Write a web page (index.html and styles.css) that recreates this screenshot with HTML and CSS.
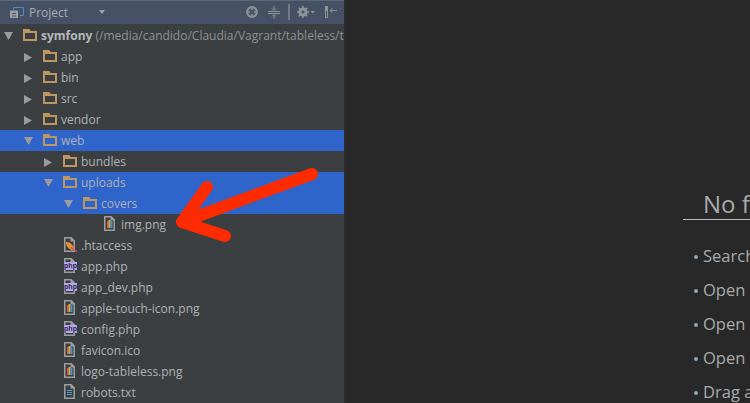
FILE: index.html
```html
<!DOCTYPE html>
<html lang="en">
<head>
<meta charset="utf-8">
<title>Project</title>
<link rel="stylesheet" href="styles.css">
</head>
<body>
<svg width="0" height="0" class="defs">
  <defs>
    <symbol id="folder" viewBox="0 0 14 12"><path fill-rule="evenodd" d="M0 0h6.500l1 2H14v10H0zM2 4v6h10V4z" fill="#bd9660"/></symbol>
    <symbol id="sheet" viewBox="0 0 11 15"><path fill-rule="evenodd" d="M0 0h7.500L11 3.500V15H0zM1.500 1.500v12h8V4.500H6.500v-3z" fill="#9b9fa1"/></symbol>
    <symbol id="image" viewBox="0 0 14 15"><use href="#sheet" width="11" height="15"/><rect x="3" y="5" width="1.500" height="7" fill="#d9603a"/><rect x="4.500" y="4" width="2" height="8" fill="#e3a93c"/><rect x="6.500" y="5" width="2" height="7" fill="#3f94d2"/></symbol>
    <symbol id="php" viewBox="0 0 14 15"><use href="#sheet" width="11" height="15"/><rect x="0" y="4" width="13" height="8" fill="#b7a5f0"/><text x="6.500" y="10.200" text-anchor="middle" class="php-mark">php</text></symbol>
    <symbol id="text" viewBox="0 0 14 15"><use href="#sheet" width="11" height="15"/><path d="M3 6.500h5M3 8.500h5M3 10.500h5" stroke="#4d9fd8"/></symbol>
    <symbol id="feather" viewBox="0 0 14 15"><use href="#sheet" width="11" height="15"/><path d="M2 5c4-.500 7 3 9 8-4 1-9-2-9-8z" fill="#e6922a"/><path d="M7 10.500l6 4" stroke="#c8467a" stroke-width="1.500"/></symbol>
  </defs>
</svg>
<div class="app">
  <aside class="panel">
    <header class="toolbar">
      <span class="tab">
        <svg class="tab-icon" width="14" height="11" viewBox="0 0 14 11"><path d="M3.500 2.500V.5h10v8H10" fill="none" stroke="#4f8fc0"/><path d="M0 3.500h8v7.500H0z" fill="#9da1a4"/><path d="M2 6h4v1H2zM2 8.500h4v1H2z" fill="#4a5468"/></svg>
        <span class="tab-title">Project</span>
        <span class="caret"></span>
      </span>
      <span class="tools">
        <svg class="t-target" width="12" height="12" viewBox="0 0 12 12"><circle cx="6" cy="6" r="4.800" fill="none" stroke="#8d9398" stroke-width="2.200"/><path d="M6 1v3.200M6 7.800V11M1 6h3.200M7.800 6H11" stroke="#8d9398" stroke-width="1.600"/></svg>
        <svg class="t-collapse" width="12" height="13" viewBox="0 0 12 13"><path d="M0 5.500h12M0 7.500h12" stroke="#8d9398"/><path d="M6 0v4M4 2.500l2 2 2-2M6 13V9M4 10.500l2-2 2 2" stroke="#8d9398" fill="none"/></svg>
        <span class="sep"></span>
        <svg class="t-gear" width="18" height="12" viewBox="0 0 18 12"><circle cx="6" cy="6" r="3.200" fill="none" stroke="#8d9398" stroke-width="2.800"/><path d="M6 0v12M0 6h12M1.800 1.800l8.400 8.400M10.200 1.800l-8.400 8.400" stroke="#8d9398" stroke-width="1.600"/><circle cx="6" cy="6" r="1.500" fill="#465166"/><path d="M13.500 5h4.500l-2.250 2.500z" fill="#8d9398"/></svg>
        <svg class="t-pin" width="12" height="12" viewBox="0 0 12 12"><path fill-rule="evenodd" d="M0 0h3v12H0zM1 5v6h1V5z" fill="#8d9398"/><path d="M5 4.500h7M7.500 2L5 4.500 7.500 7" stroke="#8d9398" fill="none"/></svg>
      </span>
    </header>
    <ul class="tree">
      <li class="row d0"><i class="arrow open"></i><svg class="folder"><use href="#folder"/></svg><span class="label"><b>symfony</b> <span class="path">(/media/candido/Claudia/Vagrant/tableless/tableless)</span></span></li>
      <li class="row d1"><i class="arrow"></i><svg class="folder"><use href="#folder"/></svg><span class="label">app</span></li>
      <li class="row d1"><i class="arrow"></i><svg class="folder"><use href="#folder"/></svg><span class="label">bin</span></li>
      <li class="row d1"><i class="arrow"></i><svg class="folder"><use href="#folder"/></svg><span class="label">src</span></li>
      <li class="row d1"><i class="arrow"></i><svg class="folder"><use href="#folder"/></svg><span class="label">vendor</span></li>
      <li class="row d1 sel"><i class="arrow open"></i><svg class="folder"><use href="#folder"/></svg><span class="label">web</span></li>
      <li class="row d2"><i class="arrow"></i><svg class="folder"><use href="#folder"/></svg><span class="label">bundles</span></li>
      <li class="row d2 sel"><i class="arrow open"></i><svg class="folder"><use href="#folder"/></svg><span class="label">uploads</span></li>
      <li class="row d3 sel"><i class="arrow open"></i><svg class="folder"><use href="#folder"/></svg><span class="label">covers</span></li>
      <li class="row d4"><svg class="file"><use href="#image"/></svg><span class="label">img.png</span></li>
      <li class="row d5"><svg class="file"><use href="#feather"/></svg><span class="label">.htaccess</span></li>
      <li class="row d5"><svg class="file"><use href="#php"/></svg><span class="label">app.php</span></li>
      <li class="row d5"><svg class="file"><use href="#php"/></svg><span class="label">app_dev.php</span></li>
      <li class="row d5"><svg class="file"><use href="#image"/></svg><span class="label">apple-touch-icon.png</span></li>
      <li class="row d5"><svg class="file"><use href="#php"/></svg><span class="label">config.php</span></li>
      <li class="row d5"><svg class="file"><use href="#image"/></svg><span class="label">favicon.ico</span></li>
      <li class="row d5"><svg class="file"><use href="#image"/></svg><span class="label">logo-tableless.png</span></li>
      <li class="row d5"><svg class="file"><use href="#text"/></svg><span class="label">robots.txt</span></li>
    </ul>
  </aside>
  <main class="editor">
    <h1 class="empty-title">No files are open</h1>
    <ul class="hints">
      <li>Search Everywhere with Double Shift</li>
      <li>Open Project View with Alt+1</li>
      <li>Open a Recent File with Ctrl+E</li>
      <li>Open Navigation Bar with Alt+Home</li>
      <li>Drag and Drop file(s) here from Nautilus</li>
    </ul>
  </main>
</div>
<svg class="annotation" width="750" height="403" viewBox="0 0 750 403">
  <path d="M312 174L182 222M207 187L182 222L225 236" fill="none" stroke="#ff2b00" stroke-width="12" stroke-linecap="round" stroke-linejoin="round"/>
</svg>
</body>
</html>
```
FILE: styles.css
```css
* { box-sizing: border-box; }
html, body { margin: 0; padding: 0; }
body {
  width: 750px;
  height: 403px;
  overflow: hidden;
  position: relative;
  background: #282828;
  font-family: "Open Sans", "Noto Sans", sans-serif;
}
.defs { position: absolute; }
.app { display: flex; height: 403px; }
.panel {
  width: 344px;
  flex: none;
  background: #3c3f41;
  overflow: hidden;
}
.toolbar {
  height: 25px;
  display: flex;
  align-items: center;
  justify-content: space-between;
  background: #465166;
  border-top: 1px solid #5a667a;
  border-bottom: 1px solid #3c3f41;
  padding: 0 7px 0 10px;
}
.tab { display: flex; align-items: center; width: 95px; margin-top: -1px; }
.tab-title { color: #a6abb0; font-size: 12px; margin-left: 5px; }
.caret {
  margin-left: auto;
  width: 0; height: 0;
  border-left: 3.500px solid transparent;
  border-right: 3.500px solid transparent;
  border-top: 4px solid #a0a4a8;
}
.tools { display: flex; align-items: center; gap: 10px; margin-top: -1px; }
.t-collapse { margin-right: -2px; }
.sep { width: 2px; height: 16px; background: #747b86; margin-right: -3px; }
.php-mark { font: 700 7px "Liberation Sans", sans-serif; fill: #2a2a44; }
.tree { list-style: none; margin: 0; padding: 0; }
.row {
  height: 21px;
  display: flex;
  align-items: center;
  white-space: nowrap;
  color: #aeb2b5;
  font-size: 12px;
}
.row.sel { background: #2f65ca; }
.d0 { padding-left: 4px; }
.d1 { padding-left: 24px; }
.d2 { padding-left: 44px; }
.d3 { padding-left: 64px; }
.d4 { padding-left: 104px; }
.d5 { padding-left: 64px; }
.arrow {
  flex: none;
  width: 8px;
  height: 9px;
  margin: 2px 11px 0 0;
  background: #9a9c9e;
  clip-path: polygon(0 0, 100% 50%, 0 100%);
}
.arrow.open {
  width: 9px;
  height: 8px;
  margin: 1px 10px 0 0;
  clip-path: polygon(0 0, 100% 0, 50% 100%);
}
.folder { flex: none; width: 14px; height: 12px; margin: 0 4px 1px 0; }
.file { flex: none; width: 14px; height: 15px; margin: 0 3px 2px 0; overflow: visible; }
.label b { font-weight: 700; color: #b4b8bb; }
.path { color: #8c9194; }
.editor {
  flex: 1;
  min-width: 0;
  overflow: hidden;
  border-left: 3px solid #2b2b2b;
  padding: 188px 0 0 336px;
  white-space: nowrap;
  color: #a7abae;
}
.empty-title {
  margin: 0 0 19px;
  padding: 0 0 0 20px;
  width: 67px;
  height: 32px;
  border-bottom: 1px solid #bdbdbd;
  font-size: 24px;
  font-weight: 400;
  line-height: 32px;
}
.hints { list-style: none; margin: 0; padding: 0 0 0 12px; }
.hints li { height: 34px; line-height: 34px; font-size: 16.500px; position: relative; padding-left: 8px; }
.hints li::before {
  content: "";
  position: absolute;
  left: -1px;
  top: 16px;
  width: 4px;
  height: 4px;
  border-radius: 50%;
  background: #8fa6b2;
}
.annotation { position: absolute; left: 0; top: 0; pointer-events: none; }
```
